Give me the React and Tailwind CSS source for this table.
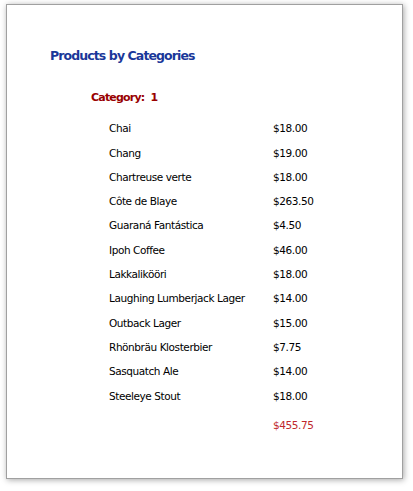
import React from 'react';

const products = [
  ['Chai', '$18.00'],
  ['Chang', '$19.00'],
  ['Chartreuse verte', '$18.00'],
  ['Côte de Blaye', '$263.50'],
  ['Guaraná Fantástica', '$4.50'],
  ['Ipoh Coffee', '$46.00'],
  ['Lakkalikööri', '$18.00'],
  ['Laughing Lumberjack Lager', '$14.00'],
  ['Outback Lager', '$15.00'],
  ['Rhönbräu Klosterbier', '$7.75'],
  ['Sasquatch Ale', '$14.00'],
  ['Steeleye Stout', '$18.00'],
];

const App = () => {
  return (
    <div className="w-[413px] h-[491px] bg-white pt-[4px] pl-[6px] font-['Tahoma','DejaVu_Sans',sans-serif]">
      <div className="w-[397px] h-[475px] border border-[#a0a0a0] bg-white shadow-[1px_1px_6px_rgba(0,0,0,0.35)]">
        <div className="pl-[43px] pt-[43px] text-[12.5px] font-bold text-[#1a3799] leading-[16px] tracking-[-0.9px]">
          Products by Categories
        </div>
        <div className="pl-[84px] pt-[27px] text-[11px] font-bold text-[#990000] leading-[14px] tracking-[-0.8px]">
          Category:&nbsp; 1
        </div>
        <div className="pt-[12px] text-[10.5px] text-black tracking-[-0.42px]">
          {products.map(([name, price]) => (
            <div key={name} className="flex h-[24.3px] items-center">
              <span className="w-[266px] pl-[102px]">{name}</span>
              <span>{price}</span>
            </div>
          ))}
          <div className="mt-[5px] flex h-[24.3px] items-center">
            <span className="w-[266px]"></span>
            <span className="text-[#c0282d]">$455.75</span>
          </div>
        </div>
      </div>
    </div>
  );
};

export default App;
